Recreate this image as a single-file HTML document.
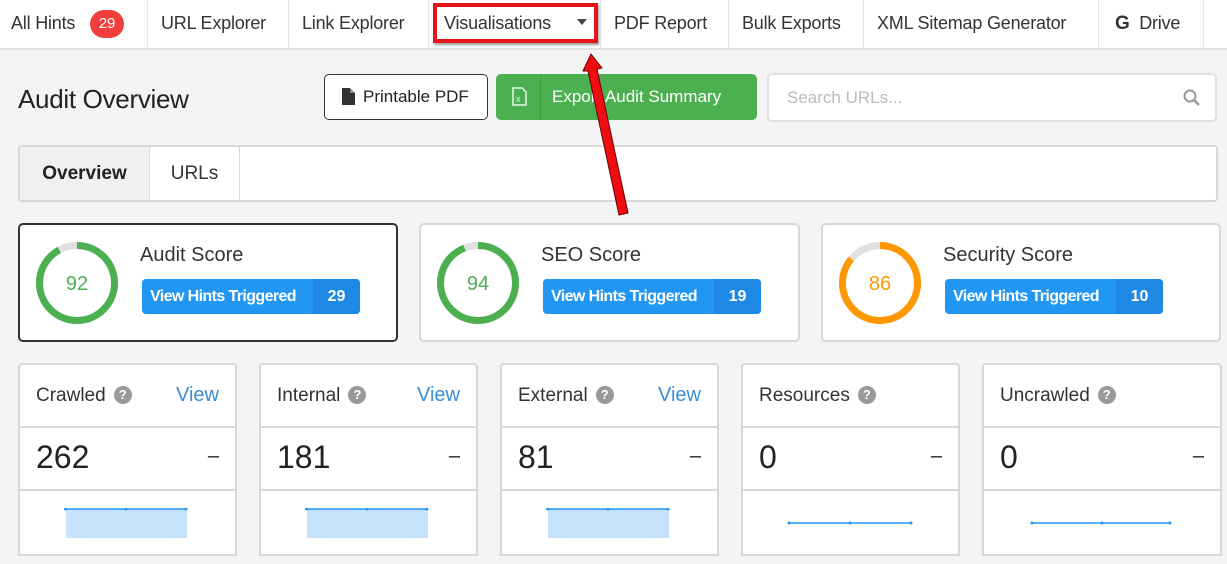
<!DOCTYPE html>
<html><head><style>
*{box-sizing:border-box;margin:0;padding:0}
body{width:1227px;height:564px;background:#f4f4f4;font-family:"Liberation Sans",sans-serif;position:relative;overflow:hidden;color:#333}
.a{position:absolute}
.nav{left:0;top:0;width:1227px;height:50px;background:#fff;border-bottom:2px solid #e2e2e2}
.ni{position:absolute;top:0;height:48px;line-height:46px;font-size:18px;color:#333;border-right:1px solid #e6e6e6;padding-left:13px;letter-spacing:-0.2px}
.card{position:absolute;background:#fff;border:2px solid #d8d8d8;border-radius:5px}
.btn{position:absolute;height:35px;border-radius:4px;background:#2196f3;color:#fff;font-size:16px;line-height:35px;letter-spacing:-0.6px;font-weight:bold}
.st{position:absolute;top:363px;height:193px;background:#fff;border:2px solid #d8d8d8;border-radius:4px 4px 0 0}
.st .h{position:absolute;left:16px;top:20px;font-size:19px;color:#333}
.st .v{position:absolute;right:16px;top:19px;font-size:20px;color:#3a8dd6}
.st .l1{position:absolute;left:0;right:0;top:61px;border-top:2px solid #d8d8d8}
.st .l2{position:absolute;left:0;right:0;top:124px;border-top:2px solid #d8d8d8}
.st .n{position:absolute;left:16px;top:74px;font-size:32px;color:#222}
.st .d{position:absolute;right:16px;top:80px;font-size:20px;color:#222}
.q{display:inline-block;width:18px;height:18px;border-radius:50%;background:#999;color:#fff;font-size:13px;font-weight:bold;text-align:center;line-height:18px;vertical-align:2px;margin-left:8px}
</style></head><body>
<div class="a nav">
<div class="ni" style="left:0;width:148px;padding-left:11px">All Hints <span style="display:inline-block;width:34px;height:28px;border-radius:14px;background:#f23d3d;color:#fff;font-size:15px;text-align:center;line-height:28px;margin-left:10px;vertical-align:1px">29</span></div>
<div class="ni" style="left:148px;width:141px">URL Explorer</div>
<div class="ni" style="left:289px;width:140px">Link Explorer</div>
<div class="ni" style="left:429px;width:172px;padding-left:15px">Visualisations</div>
<div class="ni" style="left:601px;width:128px">PDF Report</div>
<div class="ni" style="left:729px;width:135px">Bulk Exports</div>
<div class="ni" style="left:864px;width:235px">XML Sitemap Generator</div>
<div class="ni" style="left:1099px;width:105px;padding-left:16px"><b style="font-size:19px">G</b>&nbsp; Drive</div>
</div>
<div class="a" style="left:577px;top:19px;width:0;height:0;border-left:5px solid transparent;border-right:5px solid transparent;border-top:6px solid #444"></div>
<div class="a" style="left:433px;top:3px;width:165px;height:40px;border:4px solid #e8141c;box-shadow:1px 2px 2px rgba(0,0,0,.4)"></div>

<div class="a" style="left:18px;top:84px;font-size:26px;color:#222;letter-spacing:-0.3px">Audit Overview</div>
<div class="a" style="left:324px;top:74px;width:164px;height:46px;border:1px solid #333;border-radius:5px;background:#fff;font-size:17px;line-height:44px;padding-left:38px;color:#222">Printable PDF
<svg class="a" style="left:17px;top:13px" width="13" height="17" viewBox="0 0 13 17"><path d="M0 0H8L13 5V17H0Z" fill="#333"/><path d="M8 0V5H13" fill="#888"/></svg></div>
<div class="a" style="left:496px;top:74px;width:261px;height:46px;border-radius:5px;background:#4caf50;color:#fff;font-size:17px;line-height:46px;padding-left:56px">Export Audit Summary
<div class="a" style="left:44px;top:0;width:1px;height:46px;background:#3e9b42"></div>
<svg class="a" style="left:16px;top:13px" width="15" height="19" viewBox="0 0 15 19"><path d="M1 1H10L14 5V18H1Z" fill="none" stroke="#e8f5e9" stroke-width="1.5"/><text x="4" y="15" font-size="9" fill="#e8f5e9" font-family="Liberation Sans">x</text></svg></div>
<div class="a" style="left:767px;top:73px;width:450px;height:49px;background:#fff;border:2px solid #e2e2e2;border-radius:5px;font-size:17px;line-height:45px;padding-left:18px;color:#bbb">Search URLs...
<svg class="a" style="left:414px;top:14px" width="18" height="18" viewBox="0 0 18 18"><circle cx="7" cy="7" r="5.5" fill="none" stroke="#999" stroke-width="2"/><path d="M11 11L16 16" stroke="#999" stroke-width="2.5"/></svg></div>

<div class="a" style="left:18px;top:145px;width:1200px;height:57px;background:#fff;border:2px solid #d8d8d8;border-radius:4px">
<div class="a" style="left:0;top:0;width:130px;height:53px;background:#f0f0f0;border-right:1px solid #d8d8d8;font-size:19px;font-weight:bold;line-height:53px;text-align:center;color:#222">Overview</div>
<div class="a" style="left:130px;top:0;width:90px;height:53px;border-right:1px solid #d8d8d8;font-size:19px;line-height:53px;text-align:center;color:#333">URLs</div>
</div>

<div class="card" style="left:18px;top:223px;width:380px;height:119px;border-color:#333"></div>
<div class="card" style="left:419px;top:223px;width:381px;height:119px"></div>
<div class="card" style="left:821px;top:223px;width:400px;height:119px"></div>
<svg class="a" style="left:0;top:223px" width="1227" height="119">
<g fill="none" stroke-width="7">
<circle cx="77" cy="60" r="37.5" stroke="#e0e0e0"/>
<circle cx="77" cy="60" r="37.5" stroke="#4caf50" stroke-dasharray="216.8 235.6" transform="rotate(-90 77 60)"/>
<circle cx="478" cy="60" r="37.5" stroke="#e0e0e0"/>
<circle cx="478" cy="60" r="37.5" stroke="#4caf50" stroke-dasharray="221.5 235.6" transform="rotate(-90 478 60)"/>
<circle cx="880" cy="60" r="37.5" stroke="#e0e0e0"/>
<circle cx="880" cy="60" r="37.5" stroke="#ff9800" stroke-dasharray="202.6 235.6" transform="rotate(-90 880 60)"/>
</g>
<g font-family="Liberation Sans" font-size="20" text-anchor="middle"><text x="77" y="67" fill="#4caf50">92</text><text x="478" y="67" fill="#4caf50">94</text><text x="880" y="67" fill="#ff9800">86</text></g>
</svg>
<div class="a" style="left:140px;top:244px;font-size:20px;color:#333">Audit Score</div>
<div class="a" style="left:541px;top:244px;font-size:20px;color:#333">SEO Score</div>
<div class="a" style="left:943px;top:244px;font-size:20px;color:#333">Security Score</div>
<div class="btn" style="left:142px;top:279px;width:218px"><span style="padding-left:8px">View Hints Triggered</span><span class="a" style="right:0;top:0;width:47px;height:35px;background:#1e88e5;border-radius:0 4px 4px 0;text-align:center;letter-spacing:0">29</span></div>
<div class="btn" style="left:543px;top:279px;width:218px"><span style="padding-left:8px">View Hints Triggered</span><span class="a" style="right:0;top:0;width:47px;height:35px;background:#1e88e5;border-radius:0 4px 4px 0;text-align:center;letter-spacing:0">19</span></div>
<div class="btn" style="left:945px;top:279px;width:218px"><span style="padding-left:8px">View Hints Triggered</span><span class="a" style="right:0;top:0;width:47px;height:35px;background:#1e88e5;border-radius:0 4px 4px 0;text-align:center;letter-spacing:0">10</span></div>

<div class="st" style="left:18px;width:219px"><div class="h">Crawled<span class="q">?</span></div><div class="v">View</div><div class="l1"></div><div class="n">262</div><div class="d">–</div><div class="l2"></div>
<svg class="a" style="left:44px;top:143px" width="124" height="32"><rect x="2" y="1" width="121" height="29" fill="#c6e2fa"/><path d="M1 1H123" stroke="#2196f3" stroke-width="1.5"/><circle cx="1.5" cy="1" r="1.5" fill="#2196f3"/><circle cx="62" cy="1" r="1.5" fill="#2196f3"/><circle cx="122" cy="1" r="1.5" fill="#2196f3"/></svg></div>
<div class="st" style="left:259px;width:219px"><div class="h">Internal<span class="q">?</span></div><div class="v">View</div><div class="l1"></div><div class="n">181</div><div class="d">–</div><div class="l2"></div>
<svg class="a" style="left:44px;top:143px" width="124" height="32"><rect x="2" y="1" width="121" height="29" fill="#c6e2fa"/><path d="M1 1H123" stroke="#2196f3" stroke-width="1.5"/><circle cx="1.5" cy="1" r="1.5" fill="#2196f3"/><circle cx="62" cy="1" r="1.5" fill="#2196f3"/><circle cx="122" cy="1" r="1.5" fill="#2196f3"/></svg></div>
<div class="st" style="left:500px;width:219px"><div class="h">External<span class="q">?</span></div><div class="v">View</div><div class="l1"></div><div class="n">81</div><div class="d">–</div><div class="l2"></div>
<svg class="a" style="left:44px;top:143px" width="124" height="32"><rect x="2" y="1" width="121" height="29" fill="#c6e2fa"/><path d="M1 1H123" stroke="#2196f3" stroke-width="1.5"/><circle cx="1.5" cy="1" r="1.5" fill="#2196f3"/><circle cx="62" cy="1" r="1.5" fill="#2196f3"/><circle cx="122" cy="1" r="1.5" fill="#2196f3"/></svg></div>
<div class="st" style="left:741px;width:219px"><div class="h">Resources<span class="q">?</span></div><div class="l1"></div><div class="n">0</div><div class="d">–</div><div class="l2"></div>
<svg class="a" style="left:44px;top:156px" width="128" height="4"><path d="M1 2H125" stroke="#2196f3" stroke-width="1.5"/><circle cx="2" cy="2" r="1.5" fill="#2196f3"/><circle cx="63" cy="2" r="1.5" fill="#2196f3"/><circle cx="124" cy="2" r="1.5" fill="#2196f3"/></svg></div>
<div class="st" style="left:982px;width:240px"><div class="h">Uncrawled<span class="q">?</span></div><div class="l1"></div><div class="n">0</div><div class="d">–</div><div class="l2"></div>
<svg class="a" style="left:46px;top:156px" width="144" height="4"><path d="M1 2H141" stroke="#2196f3" stroke-width="1.5"/><circle cx="2" cy="2" r="1.5" fill="#2196f3"/><circle cx="72" cy="2" r="1.5" fill="#2196f3"/><circle cx="140" cy="2" r="1.5" fill="#2196f3"/></svg></div>

<svg class="a" style="left:0;top:0" width="1227" height="564">
<path d="M591 54L583 71L588 71L619 215L628 213L597 69L602 68Z" fill="#f00d12" stroke="#6a0000" stroke-width="1" stroke-linejoin="round"/>
</svg>
</body></html>
